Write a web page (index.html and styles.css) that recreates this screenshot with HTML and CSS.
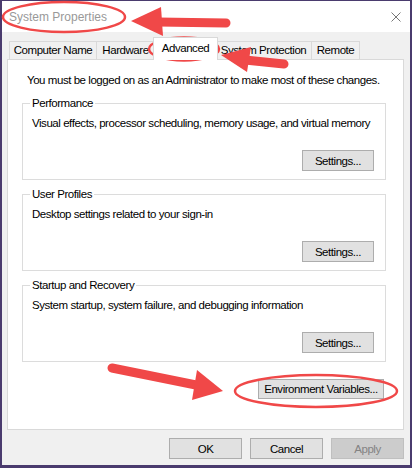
FILE: index.html
```html
<!DOCTYPE html>
<html>
<head>
  <title>System Properties</title>
  <meta name="viewport" content="width=device-width, initial-scale=1">
  <link rel="stylesheet" href="styles.css">
</head>
<body>
  <div class="window">
    <div class="titlebar">
      <span class="title">System Properties</span>
      <svg class="close" width="10" height="10" viewBox="0 0 10 10">
        <path d="M0.5 0.5 L9.5 9.5 M9.5 0.5 L0.5 9.5" stroke="#777" stroke-width="1" fill="none"/>
      </svg>
    </div>

    <div class="content">
      <!-- Tabs -->
      <div class="tabs">
        <div class="tab">Computer Name</div>
        <div class="tab">Hardware</div>
        <div class="tab active">Advanced</div>
        <div class="tab">System Protection</div>
        <div class="tab">Remote</div>
      </div>

      <div class="panel">
        <p class="note">You must be logged on as an Administrator to make most of these changes.</p>

        <fieldset class="group">
          <legend>Performance</legend>
          <p>Visual effects, processor scheduling, memory usage, and virtual memory</p>
          <div class="group-actions"><button class="btn">Settings...</button></div>
        </fieldset>

        <fieldset class="group">
          <legend>User Profiles</legend>
          <p>Desktop settings related to your sign-in</p>
          <div class="group-actions"><button class="btn">Settings...</button></div>
        </fieldset>

        <fieldset class="group">
          <legend>Startup and Recovery</legend>
          <p>System startup, system failure, and debugging information</p>
          <div class="group-actions"><button class="btn">Settings...</button></div>
        </fieldset>

        <div class="env-row">
          <button class="btn btn-env">Environment Variables...</button>
        </div>
      </div>

      <div class="actions">
        <button class="btn">OK</button>
        <button class="btn">Cancel</button>
        <button class="btn" disabled>Apply</button>
      </div>
    </div>

    <!-- red annotations drawn over the dialog -->
    <svg class="marks" width="412" height="468" viewBox="0 0 412 468">
      <g fill="none" stroke="#f04848" stroke-width="2.5">
        <ellipse cx="64" cy="17" rx="61" ry="15"/>
        <ellipse cx="184" cy="49" rx="35" ry="11.5"/>
        <ellipse cx="316" cy="391" rx="81" ry="16"/>
      </g>
      <g stroke="#f04848" stroke-width="9" stroke-linecap="round">
        <line x1="158" y1="22" x2="226" y2="23"/>
        <line x1="245" y1="60" x2="284" y2="64"/>
        <line x1="112" y1="368" x2="196" y2="385"/>
      </g>
      <g fill="#f04848">
        <polygon points="131,21 161,7 163,36"/>
        <polygon points="221,55 251,47 247,72"/>
        <polygon points="223,391 197,370 192,400"/>
      </g>
    </svg>
  </div>
</body>
</html>
```

FILE: styles.css
```css
/* Common styles */
body {
  margin: 0;
  padding: 0;
  background-color: #4a3b6e;
  font-family: "Liberation Sans", Arial, sans-serif;
  font-size: 11.5px;
  letter-spacing: -0.45px;
  color: #000000;
}

p {
  margin: 0;
}

/* Window frame */
.window {
  position: relative;
  width: 412px;
  height: 467px;
  box-sizing: border-box;
  border: 2px solid #4a3b6e;
  border-top-width: 1px;
  background-color: #f0f0f0;
}

.titlebar {
  display: flex;
  align-items: center;
  justify-content: space-between;
  height: 31px;
  padding: 0 9px 0 7px;
  background-color: #ffffff;
}

.title {
  color: #999999;
  font-size: 12px;
  letter-spacing: 0;
}

.close {
  display: block;
}

.content {
  padding: 5px 6px 0 5px;
}

/* Tabs */
.tabs {
  display: grid;
  grid-template-columns: 88px 58px 61px 96px 48px;
  align-items: end;
  height: 22px;
  padding-left: 2px;
}

.tab {
  height: 18px;
  line-height: 17px;
  box-sizing: border-box;
  text-align: center;
  border: 1px solid #d9d9d9;
  border-bottom: none;
  white-space: nowrap;
}

.tab + .tab {
  border-left: none;
}

.tab.active {
  position: relative;
  z-index: 1;
  height: 23px;
  line-height: 20px;
  margin: 0 -2px -1px;
  background-color: #ffffff;
  border-left: 1px solid #d9d9d9;
}

/* Panel */
.panel {
  height: 371px;
  box-sizing: border-box;
  padding: 0 17px 0 14px;
  background-color: #ffffff;
  border: 1px solid #d9d9d9;
}

.note {
  margin: 13px 0 8px 5px;
  line-height: 15px;
  white-space: nowrap;
}

.group {
  min-width: 0;
  margin: 0 0 7px;
  padding: 0 11px 8px 9px;
  border: 1px solid #dcdcdc;
}

.group legend {
  margin-left: -2px;
  padding: 0 2px;
  line-height: 14px;
}

.group p {
  margin-top: 6px;
  line-height: 15px;
  white-space: nowrap;
}

.group-actions {
  display: flex;
  justify-content: flex-end;
  margin-top: 19px;
}

/* Buttons */
.btn {
  width: 72px;
  height: 21px;
  padding: 0;
  font-family: inherit;
  font-size: inherit;
  letter-spacing: inherit;
  white-space: nowrap;
  color: #000000;
  background-color: #e1e1e1;
  border: 1px solid #adadad;
  border-radius: 0;
}

.btn:disabled {
  color: #838383;
  background-color: #cccccc;
  border-color: #bfbfbf;
}

.env-row {
  display: flex;
  justify-content: flex-end;
  margin-top: 17px;
  padding-right: 2px;
}

.btn-env {
  width: 126px;
  height: 20px;
}

.actions {
  display: flex;
  justify-content: flex-end;
  gap: 8px;
  margin-top: 8px;
}

.actions .btn {
  width: 73px;
}

/* Annotations */
.marks {
  position: absolute;
  top: -1px;
  left: -2px;
  pointer-events: none;
}
```
